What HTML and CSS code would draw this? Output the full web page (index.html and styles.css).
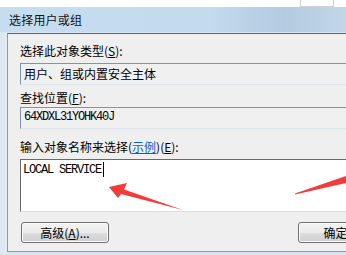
FILE: index.html
```html
<!DOCTYPE html>
<html lang="zh-CN">
<head>
  <meta charset="UTF-8">
  <title>选择用户或组</title>
  <link rel="stylesheet" href="styles.css">
</head>
<body>
  <div class="top-strip">
    <div class="tab-box"></div>
  </div>
  <div class="title-bar">选择用户或组</div>
  <div class="window">
    <div class="frame-left"></div>
    <div class="panel">
      <div class="label label-first">选择此对象类型(<u>S</u>):</div>
      <div class="field">用户、组或内置安全主体</div>

      <div class="label label-second">查找位置(<u>F</u>):</div>
      <div class="field mono">64XDXL31YOHK40J</div>

      <div class="label label-third">输入对象名称来选择(<a class="link">示例</a>)(<u>E</u>):</div>
      <div class="text-area"><span class="mono">LOCAL SERVICE</span><span class="caret"></span></div>

      <div class="button-row">
        <button class="btn btn-advanced">高级(<u>A</u>)...</button>
        <div class="button-group">
          <button class="btn">确定</button>
          <button class="btn">取消</button>
        </div>
      </div>
    </div>
  </div>

  <svg class="arrows" width="346" height="255" viewBox="0 0 346 255">
    <polygon points="109,187 127,183 124,189.5 183,210 121,194 118,198" fill="#f53a3a"/>
    <polygon points="295,193.5 350,174.5 350,182 295,194.5" fill="#f53a3a"/>
  </svg>
</body>
</html>
```

FILE: styles.css
```css
* {
  box-sizing: border-box;
  margin: 0;
  padding: 0;
}

body {
  width: 346px;
  height: 255px;
  overflow: hidden;
  position: relative;
  background: #ffffff;
  font-family: "Noto Sans CJK SC", "Liberation Sans", sans-serif;
  font-size: 12px;
  color: #000;
}

.top-strip {
  height: 7px;
  background: #ffffff;
  position: relative;
}

.tab-box {
  position: absolute;
  left: 300px;
  top: 0;
  width: 34px;
  height: 7px;
  border: 1px solid #d0d0d0;
  border-top: none;
  background: #ffffff;
}

.title-bar {
  height: 26px;
  padding-left: 9px;
  line-height: 25px;
  font-size: 12px;
  letter-spacing: 0.2px;
  color: #111;
  background: linear-gradient(90deg, #c6dcf1 0%, #c3daef 60%, #b3cae0 82%, #c2d6e8 100%);
  border-bottom: 1px solid #d9e7f3;
}

.window {
  display: flex;
  height: 222px;
  background: #d8e4ef;
}

.frame-left {
  width: 7px;
  flex: 0 0 7px;
  background: linear-gradient(90deg, #dbe6f0, #e3ebf2);
}

.panel {
  flex: 0 0 459px;
  width: 459px;
  height: 219px;
  background: #efefef;
  border-top: 1px solid #5b6672;
  border-left: 1px solid #8f9aa5;
  border-bottom: 1px solid #8f9aa5;
  padding: 0 12px;
}

.label {
  height: 14px;
  line-height: 14px;
  font-size: 12px;
}

.label-first {
  margin-top: 10px;
  margin-bottom: 5px;
}

.label-second {
  margin-top: 6px;
  margin-bottom: 2px;
}

.label-third {
  margin-top: 11px;
  margin-bottom: 5px;
}

.link {
  color: #0066cc;
  text-decoration: underline;
}

.field {
  height: 22px;
  line-height: 19px;
  padding-left: 3px;
  background: #f0f0f0;
  border-top: 1px solid #7b97ae;
  border-left: 1px solid #7b97ae;
  border-bottom: 1px solid #dde5ec;
}

.mono {
  font-family: "Liberation Mono", monospace;
  font-size: 12px;
  letter-spacing: -1.2px;
}

.text-area {
  height: 53px;
  background: #ffffff;
  border-top: 1px solid #6a6a6a;
  border-left: 1px solid #6a6a6a;
  border-bottom: 1px solid #dedede;
  padding: 2px 0 0 2px;
  line-height: 16px;
  display: flex;
  align-items: flex-start;
}

.caret {
  display: inline-block;
  width: 1px;
  height: 15px;
  margin-left: 2px;
  background: #000;
}

.button-row {
  display: flex;
  justify-content: space-between;
  margin-top: 10px;
}

.button-group {
  display: flex;
  gap: 6px;
}

.btn {
  width: 75px;
  height: 21px;
  font-family: "Noto Sans CJK SC", "Liberation Sans", sans-serif;
  font-size: 12px;
  color: #000;
  border: 1px solid #707070;
  border-radius: 3px;
  background: linear-gradient(180deg, #f3f3f3 0%, #ebebeb 50%, #dddddd 51%, #cfcfcf 100%);
  box-shadow: inset 0 0 0 1px #fbfbfb;
}

.btn-advanced {
  width: 88px;
  margin-left: 1px;
}

.arrows {
  position: absolute;
  left: 0;
  top: 0;
  pointer-events: none;
}
```
